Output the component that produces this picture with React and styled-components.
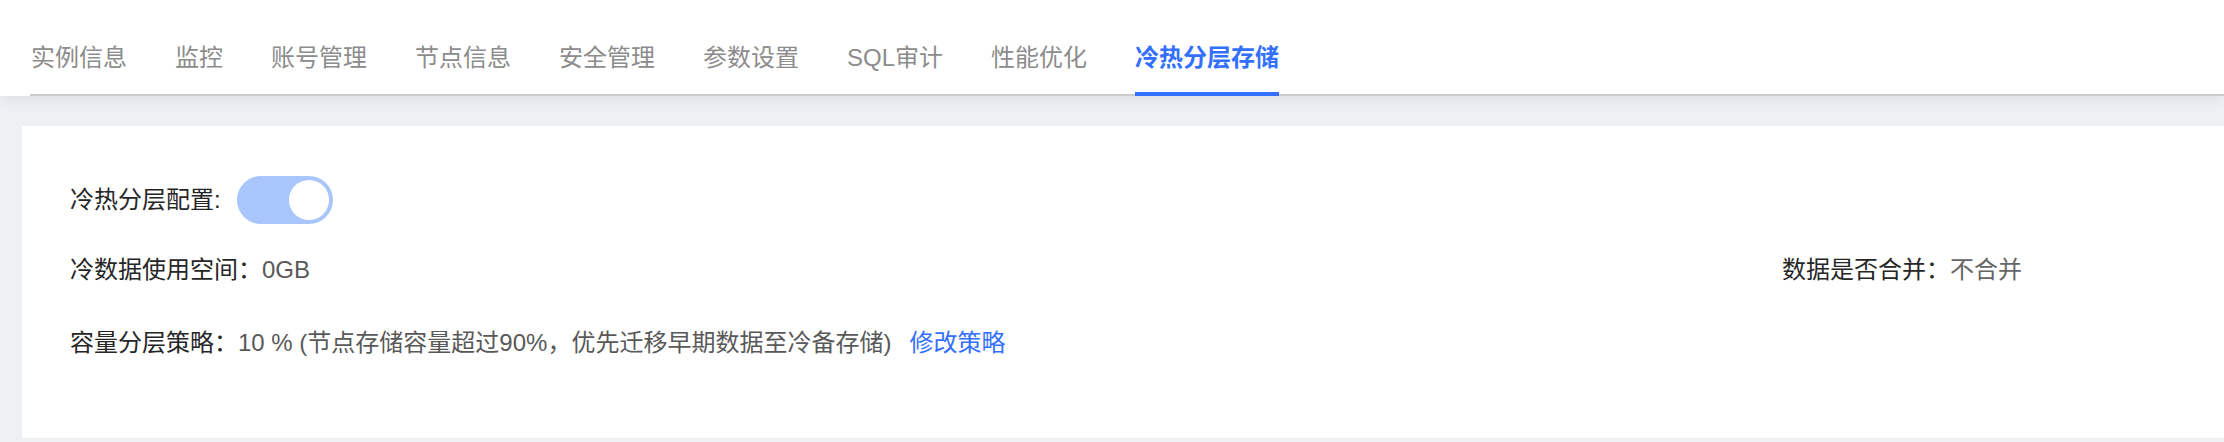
import React from 'react';
import styled, { createGlobalStyle } from 'styled-components';

const GlobalStyle = createGlobalStyle`
  html, body {
    margin: 0;
    padding: 0;
    background: #eef0f4;
  }
  body {
    font-family: "Liberation Sans", "Noto Sans CJK SC", sans-serif;
    overflow: hidden;
  }
`;

const Page = styled.div`
  width: 2224px;
  height: 442px;
  background: #eef0f4;
`;

const Header = styled.div`
  height: 96px;
  background: #fff;
  box-shadow: 0 4px 14px rgba(40, 44, 60, 0.08);
  position: relative;
  z-index: 1;
`;

const TabNav = styled.div`
  margin-left: 30px;
  height: 94px;
  padding-left: 1px;
  display: flex;
  gap: 48px;
  border-bottom: 2px solid #cbcbd0;
`;

const Tab = styled.div`
  position: relative;
  height: 94px;
  box-sizing: border-box;
  padding-top: 16px;
  display: flex;
  align-items: center;
  font-size: 24px;
  white-space: nowrap;
  color: ${(p) => (p.$active ? '#3370ff' : '#8c8c8c')};
  font-weight: ${(p) => (p.$active ? 600 : 400)};
  cursor: pointer;

  &::after {
    content: '';
    display: ${(p) => (p.$active ? 'block' : 'none')};
    position: absolute;
    left: 0;
    right: 0;
    bottom: -2px;
    height: 4px;
    background: #3370ff;
  }
`;

const Card = styled.div`
  margin: 30px 0 0 22px;
  height: 312px;
  box-sizing: border-box;
  background: #fff;
  padding: 50px 48px 0 48px;
`;

const Row = styled.div`
  display: grid;
  grid-template-columns: 1fr 394px;
  align-items: center;
  margin-top: ${(p) => p.$mt || 0}px;
  min-height: 32px;
`;

const Field = styled.div`
  display: flex;
  align-items: center;
  font-size: 24px;
  line-height: 32px;
  white-space: nowrap;
`;

const Label = styled.span`
  color: #262626;
`;

const Value = styled.span`
  color: ${(p) => p.$light ? '#666' : '#595959'};
`;

const Link = styled.a`
  color: #3370ff;
  margin-left: 18px;
  cursor: pointer;
`;

const Switch = styled.div`
  width: 96px;
  height: 48px;
  margin-left: 16px;
  border-radius: 24px;
  background: #a8c6fb;
  box-sizing: border-box;
  padding: 4px;
  display: flex;
  justify-content: flex-end;
`;

const Knob = styled.div`
  width: 40px;
  height: 40px;
  border-radius: 50%;
  background: #fff;
`;

const tabs = ['实例信息', '监控', '账号管理', '节点信息', '安全管理', '参数设置', 'SQL审计', '性能优化', '冷热分层存储'];

const App = () => (
  <Page>
    <GlobalStyle />
    <Header>
      <TabNav>
        {tabs.map((t) => (
          <Tab key={t} $active={t === '冷热分层存储'}>{t}</Tab>
        ))}
      </TabNav>
    </Header>
    <Card>
      <Row>
        <Field>
          <Label>冷热分层配置:</Label>
          <Switch>
            <Knob />
          </Switch>
        </Field>
      </Row>
      <Row $mt={30}>
        <Field>
          <Label>冷数据使用空间：</Label>
          <Value>0GB</Value>
        </Field>
        <Field>
          <Label>数据是否合并：</Label>
          <Value $light>不合并</Value>
        </Field>
      </Row>
      <Row $mt={41}>
        <Field>
          <Label>容量分层策略：</Label>
          <Value>10 % (节点存储容量超过90%，优先迁移早期数据至冷备存储)</Value>
          <Link>修改策略</Link>
        </Field>
      </Row>
    </Card>
  </Page>
);

export default App;
